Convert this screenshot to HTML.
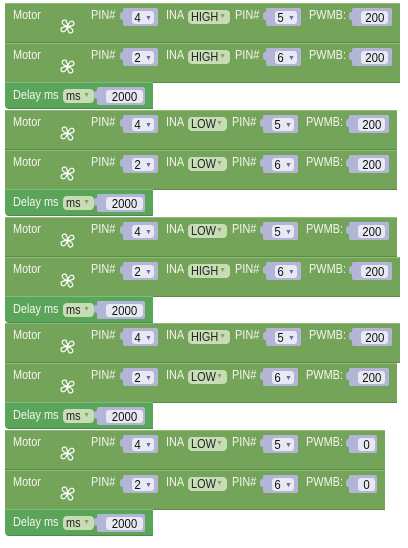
<!DOCTYPE html>
<html><head><meta charset="utf-8"><style>
body{margin:0;width:408px;height:548px;background:#fff;position:relative;overflow:hidden;font-family:"Liberation Sans",sans-serif;font-size:12px}
.b{position:absolute;left:5px;height:40px;background:#74a45a;border-top:1px solid #8fbb78;border-bottom:1px solid #5e8a48;box-sizing:border-box}
.d{position:absolute;left:5px;width:148px;height:27px;background:#5ba55b;border-top:1px solid #7cbf7c;border-bottom:1px solid #4a8a4a;box-sizing:border-box;border-radius:0 0 0 4px}
.t{position:absolute;color:#f4f4ec;top:3px;font-size:13px;white-space:nowrap;transform:scaleX(.84);transform-origin:left}
.s{position:absolute;top:4px;height:18px;background:#b3b5d6;border-radius:2px}
.s:before{content:"";position:absolute;left:-3px;top:4px;width:5px;height:8px;background:#b3b5d6;border-radius:3px}
.i{position:absolute;left:9px;top:3px;height:13px;background:#e8e9f3;border-radius:3px;color:#111;font-size:13px;line-height:13px;text-align:center;white-space:nowrap}
.i span.x{display:inline-block;transform:scaleX(.88)}
.dd{position:absolute;top:6px;height:14px;background:#c8dcb5;border-radius:4px;color:#222;font-size:13px;line-height:14px;padding-left:3px;box-sizing:border-box;white-space:nowrap;overflow:hidden}
.dd span.x{display:inline-block;transform:scaleX(.84);transform-origin:left}
.ar{font-size:7px;color:#6868a8;vertical-align:2px}
.dd .ar{color:#7ea86a}
svg{position:absolute}
</style></head><body><div id="r"></div>
<script>
var fan='<svg width="17" height="17" viewBox="0 0 16 16" style="left:54px;top:14px"><g fill="none" stroke="#fff" stroke-width="1.1"><path d="M8 8C5 7 3 6 3 4s3-3 4-1 1 3 1 5z"/><path d="M8 8C9 5 10 3 12 3s3 3 1 4-3 1-5 1z"/><path d="M8 8C11 9 13 10 13 12s-3 3-4 1-1-3-1-5z"/><path d="M8 8C7 11 6 13 4 13s-3-3-1-4 3-1 5-1z"/></g></svg>';
function sock(x,w,iw,txt,arrow){return '<div class="s" style="left:'+x+'px;width:'+w+'px"><div class="i" style="width:'+iw+'px"><span class="x">'+txt+'</span>'+(arrow?' <span class="ar">▼</span>':'')+'</div></div>'}
function motor(top,w,pin,hi,pin2,pwm){
 var o=hi?3:0, h='<div class="b" style="top:'+top+'px;width:'+w+'px">';
 h+='<div class="t" style="left:8px">Motor</div>'+fan;
 h+='<div class="t" style="left:86px">PIN#</div>'+sock(118,35,22,pin,1);
 h+='<div class="t" style="left:161px">INA</div>';
 h+='<div class="dd" style="left:183px;width:'+(hi?42:39)+'px"><span class="x">'+(hi?'HIGH':'LOW')+'</span><span class="ar" style="position:absolute;right:4px;top:0">▼</span></div>';
 h+='<div class="t" style="left:'+(227+o)+'px">PIN#</div>'+sock(258+o,35,22,pin2,1);
 h+='<div class="t" style="left:'+(301+o)+'px">PWMB:</div>';
 h+=sock(344+o,pwm=='0'?28:40,pwm=='0'?17:27,pwm,0);
 return h+'</div>';
}
function delay(top){return '<div class="d" style="top:'+top+'px"><div class="t" style="left:8px;top:4px">Delay ms</div><div class="dd" style="left:58px;top:6px;width:31px"><span class="x">ms</span><span class="ar" style="position:absolute;right:4px;top:0">▼</span></div>'+sock(92,48,37,'2000',0).replace('top:4px','top:3px')+'</div>'}
var g=[[3,['4',1,'5','200',395],['2',1,'6','200',395]],[110,['4',0,'5','200',392],['2',0,'6','200',392]],[217,['4',0,'5','200',392],['2',1,'6','200',395]],[323,['4',1,'5','200',395],['2',0,'6','200',392]],[430,['4',0,'5','0',380],['2',0,'6','0',380]]];
var h='';
g.forEach(function(x){var t=x[0];h+=motor(t,x[1][4],x[1][0],x[1][1],x[1][2],x[1][3]);h+=motor(t+40,x[2][4],x[2][0],x[2][1],x[2][2],x[2][3]);h+=delay(t+79)});
document.getElementById('r').innerHTML=h;
</script></body></html>
